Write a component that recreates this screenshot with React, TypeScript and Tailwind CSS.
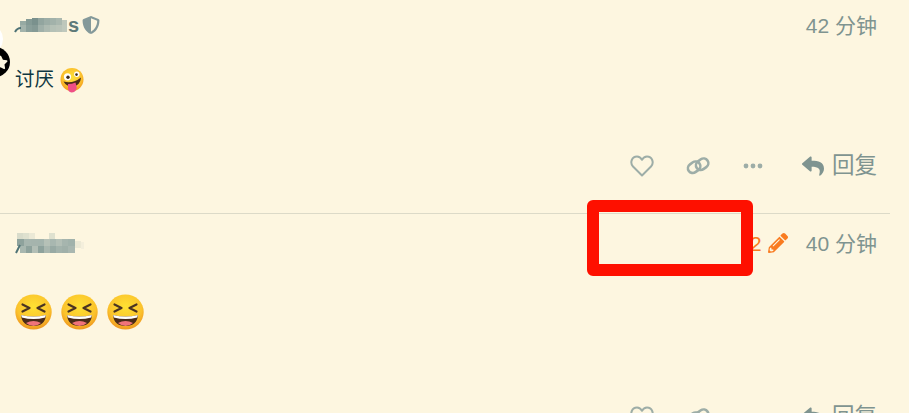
import { FaPencilAlt, FaReply, FaShieldAlt, FaStar } from "react-icons/fa";

const font = "font-['Liberation_Sans','Noto_Sans_CJK_SC',sans-serif]";

type Block = [number, number, number, string];

const firstName: Block[] = [
  [6, 5, 6, "#97aaa3"],
  [12, 3, 6, "#849a95"],
  [18, 2, 6, "#7a918d"],
  [24, 2, 6, "#92a59f"],
  [30, 2, 6, "#9cada6"],
  [36, 2, 6, "#a2b2aa"],
  [42, 2, 6, "#aab8af"],
  [48, 4, 5, "#bec7bb"],
  [6, 9, 6, "#a3b3ab"],
  [12, 9, 6, "#8a9f9a"],
  [18, 9, 6, "#859a95"],
  [24, 9, 6, "#a0b0a9"],
  [30, 9, 6, "#adbab1"],
  [36, 9, 6, "#b5c1b6"],
  [42, 9, 6, "#b9c3b8"],
  [48, 9, 5, "#bfc8bc"],
];

const secondName: Block[] = [
  [3, 0, 6, "#d9dccb"],
  [9, 0, 6, "#dfe1cf"],
  [15, 0, 6, "#ebe9d6"],
  [35, 0, 6, "#dfe1cf"],
  [3, 6, 7, "#8ea29c"],
  [10, 6, 7, "#a6b5ae"],
  [17, 6, 7, "#a5b4ad"],
  [24, 6, 6, "#a4b4ad"],
  [30, 6, 6, "#b6c1b7"],
  [36, 6, 6, "#a8b7b0"],
  [42, 6, 6, "#b3bfb6"],
  [48, 6, 6, "#a6b5ae"],
  [54, 6, 7, "#a1b2ab"],
  [6, 13, 6, "#a8b7af"],
  [12, 13, 6, "#8ea29c"],
  [18, 13, 6, "#b2beb5"],
  [24, 13, 6, "#8ea29c"],
  [30, 13, 6, "#a9b7af"],
  [36, 13, 6, "#98aaa4"],
  [42, 13, 6, "#a3b3ac"],
  [48, 13, 6, "#a0b0a9"],
  [54, 13, 7, "#a9b7b0"],
  [61, 8, 6, "#ece9d5"],
  [67, 9, 3, "#f4efdc"],
];

function Mosaic({ blocks, width, height, leg }: { blocks: Block[]; width: number; height: number; leg: string }) {
  return (
    <svg width={width} height={height} viewBox={`0 0 ${width} ${height}`} className="shrink-0">
      {blocks.map(([x, y, w, fill]) => (
        <rect key={`${x}-${y}`} x={x} y={y} width={w} height={7} fill={fill} />
      ))}
      <path d={leg} fill="none" stroke="#4f7376" strokeWidth="2" />
    </svg>
  );
}

function ZanyFace() {
  return (
    <svg width="24" height="25" viewBox="0 0 24 25" className="shrink-0">
      <defs>
        <radialGradient id="zany" cx="50%" cy="40%" r="60%">
          <stop offset="0%" stopColor="#fde13a" />
          <stop offset="70%" stopColor="#fbc02d" />
          <stop offset="100%" stopColor="#f29a1f" />
        </radialGradient>
      </defs>
      <circle cx="12" cy="11.5" r="11.5" fill="url(#zany)" />
      <circle cx="7.5" cy="8.8" r="3.6" fill="#fff" />
      <circle cx="8" cy="9.2" r="1.7" fill="#3c2a1a" />
      <circle cx="16.8" cy="6.2" r="2.7" fill="#fff" />
      <circle cx="16.5" cy="6.6" r="1.3" fill="#3c2a1a" />
      <path d="M3.5 13.5 Q13 16 21 9.5 Q20.5 17 13 18.5 Q6.5 19 3.5 13.5Z" fill="#4a2b18" />
      <path d="M8 16 Q12 16 15.5 14.5 L16.8 20 Q15.5 24.5 11.5 24.5 Q8 24 8 20Z" fill="#ef4f86" />
    </svg>
  );
}

function LaughFace() {
  return (
    <svg width="37" height="36" viewBox="0 0 37 36" className="shrink-0">
      <defs>
        <radialGradient id="laugh" cx="50%" cy="35%" r="65%">
          <stop offset="0%" stopColor="#fee133" />
          <stop offset="70%" stopColor="#fbc22c" />
          <stop offset="100%" stopColor="#ee951f" />
        </radialGradient>
      </defs>
      <ellipse cx="18.5" cy="18" rx="18.2" ry="17.6" fill="url(#laugh)" />
      <path d="M7.5 10.5 L14.5 14 L7.5 17.5" fill="none" stroke="#4a3322" strokeWidth="2.2" strokeLinecap="round" strokeLinejoin="round" />
      <path d="M29.5 10.5 L22.5 14 L29.5 17.5" fill="none" stroke="#4a3322" strokeWidth="2.2" strokeLinecap="round" strokeLinejoin="round" />
      <path d="M6 21 Q18.5 24 31 21 Q30 32 18.5 32 Q7 32 6 21Z" fill="#4a2b18" />
      <path d="M6.2 21 Q18.5 24 30.8 21 L30.2 23.6 Q18.5 26.6 6.8 23.6Z" fill="#fff" />
      <path d="M11 29 Q18.5 25 26 29 Q22.5 32 18.5 32 Q14.5 32 11 29Z" fill="#f0737a" />
    </svg>
  );
}

function HeartIcon() {
  return (
    <svg width="24" height="22" viewBox="0 0 24 22" className="mr-[32px] shrink-0" fill="none" stroke="#9dada7" strokeWidth="2" strokeLinejoin="round">
      <path d="M12 20.5 L3 11.5 C-0.5 7.5 2 1.5 7 1.5 C9.5 1.5 11 3 12 4.8 C13 3 14.5 1.5 17 1.5 C22 1.5 24.5 7.5 21 11.5 Z" />
    </svg>
  );
}

function LinkIcon() {
  return (
    <svg width="24" height="20" viewBox="0 0 24 20" className="mr-[33px] shrink-0" fill="none" stroke="#9dada7" strokeWidth="2.6">
      <rect x="1.5" y="6.5" width="13" height="9.5" rx="4.75" transform="rotate(-35 8 11)" />
      <rect x="9.5" y="3.5" width="13" height="9.5" rx="4.75" transform="rotate(-35 16 8)" />
    </svg>
  );
}

function DotsIcon() {
  return (
    <svg width="20" height="6" viewBox="0 0 20 6" className="mr-[38px] shrink-0" fill="#9dada7">
      <circle cx="3" cy="3" r="2.4" />
      <circle cx="10" cy="3" r="2.4" />
      <circle cx="17" cy="3" r="2.4" />
    </svg>
  );
}

function Actions() {
  return (
    <div className="flex items-center justify-end text-[#7f9490]">
      <HeartIcon />
      <LinkIcon />
      <DotsIcon />
      <FaReply className="mr-[7px] h-[22px] w-[24px]" />
      <span className="text-[22.5px] leading-none">回复</span>
    </div>
  );
}

export default function App() {
  return (
    <div className={`relative h-[413px] w-[909px] overflow-hidden bg-[#fdf6e0] ${font}`}>
      {/* cut-off avatar with its badge */}
      <div className="absolute -left-[30px] top-[24px] h-[30px] w-[33px] rounded-full bg-white" />
      <div className="absolute -left-[20px] top-[47px] flex h-[30px] w-[30px] items-center justify-end rounded-full bg-black pr-[2px] text-[#fdf6e0]">
        <FaStar className="h-[15px] w-[15px]" />
      </div>

      <article className="h-[214px] w-[890px] border-b border-[#dcdac8] pr-[13px] pl-[14px]">
        <header className="flex h-[50px] items-center justify-between">
          <div className="flex items-center">
            <Mosaic blocks={firstName} width={54} height={18} leg="M1 16 Q3 12 7 12" />
            <span className="text-[20px] leading-none font-bold text-[#5e7a79]">s</span>
            <FaShieldAlt className="ml-[3px] h-[18px] w-[18px] text-[#84999a]" />
          </div>
          <span className="text-[21px] leading-none text-[#7f9490]">42 分钟</span>
        </header>
        <div className="mt-[18px] flex h-[24px] items-center text-[#0f3640]">
          <span className="ml-[1px] text-[19.5px] leading-none">讨厌</span>
          <span className="ml-[6px]">
            <ZanyFace />
          </span>
        </div>
        <div className="mt-[63px]">
          <Actions />
        </div>
      </article>

      <article className="w-[890px] pr-[13px] pl-[14px]">
        <header className="flex h-[58px] items-center justify-between">
          <Mosaic blocks={secondName} width={70} height={21} leg="M2 20 L6 12" />
          <div className="flex items-center">
            <span className="text-[21px] leading-none text-[#f97b20]">2</span>
            <FaPencilAlt className="ml-[6px] h-[20px] w-[20px] text-[#f97b20]" />
            <span className="ml-[18px] text-[21px] leading-none text-[#7f9490]">40 分钟</span>
          </div>
        </header>
        <div className="mt-[22px] flex gap-[9px] pl-[1px]">
          <LaughFace />
          <LaughFace />
          <LaughFace />
        </div>
        <div className="mt-[76px]">
          <Actions />
        </div>
      </article>

      {/* red annotation box drawn over the screenshot */}
      <div className="absolute top-[200px] left-[587px] h-[76px] w-[166px] rounded-[6px] border-[12px] border-[#fe1000]" />
    </div>
  );
}
